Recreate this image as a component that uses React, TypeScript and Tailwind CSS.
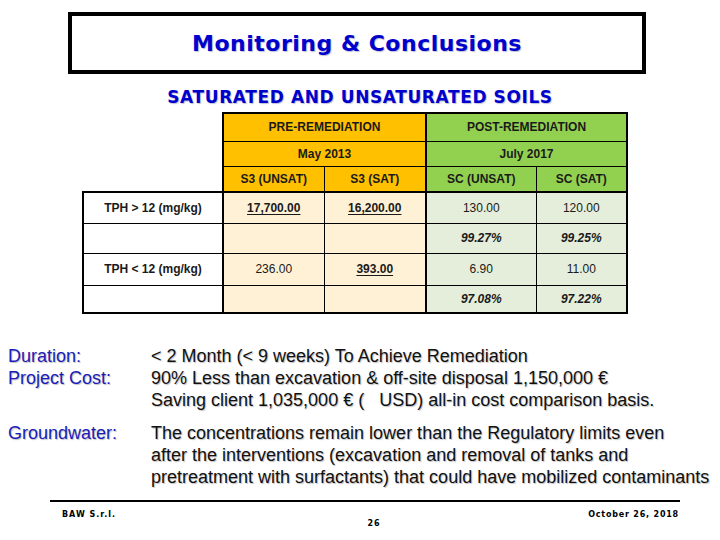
const orange = "bg-[#ffc000]"
const green = "bg-[#92d050]"
const lightOrange = "bg-[#fef1d6]"
const lightGreen = "bg-[#e4eedb]"

type Row = {
  label: string
  pre: [string, string]
  post: [string, string]
  pct?: boolean
  h: string
}

const rows: Row[] = [
  { label: "TPH > 12 (mg/kg)", pre: ["17,700.00", "16,200.00"], post: ["130.00", "120.00"], h: "h-[31px]" },
  { label: "", pre: ["", ""], post: ["99.27%", "99.25%"], pct: true, h: "h-[30px]" },
  { label: "TPH < 12 (mg/kg)", pre: ["236.00", "393.00"], post: ["6.90", "11.00"], h: "h-[32px]" },
  { label: "", pre: ["", ""], post: ["97.08%", "97.22%"], pct: true, h: "h-[28px]" },
]

const App = () => {
  return (
    <div className="w-[720px] h-[540px] bg-white overflow-hidden font-['Liberation_Sans',Arial,sans-serif] flex flex-col">

      { /* title box */ }
      <div className="mt-[12px] ml-[68px] w-[578px] h-[62px] border-[4px] border-black flex items-center justify-center">
        <h1 className="text-[22px] font-bold text-[#0000cc] font-['DejaVu_Sans',sans-serif] tracking-[0.5px] [text-shadow:1px_1px_1px_rgba(0,0,80,0.25)]">Monitoring &amp; Conclusions</h1>
      </div>

      <h2 className="mt-[13px] text-center text-[17px] font-bold text-[#0000cc] leading-[20px] font-['DejaVu_Sans',sans-serif] tracking-[0.6px] [text-shadow:1px_1px_1px_rgba(0,0,80,0.25)]">SATURATED AND UNSATURATED SOILS</h2>

      { /* table */ }
      <div className="mt-[5px] pl-[82px]">
        <table className="border-collapse text-[12px] text-center text-[#1a1a1a]">
          <colgroup>
            <col className="w-[140px]" />
            <col className="w-[101px]" />
            <col className="w-[102px]" />
            <col className="w-[110px]" />
            <col className="w-[91px]" />
          </colgroup>
          <tbody>
            <tr className="h-[28px]">
              <td rowSpan={3} className="p-0"></td>
              <th colSpan={2} className={`${orange} font-bold border-t-2 border-l-2 border-black p-0`}>PRE-REMEDIATION</th>
              <th colSpan={2} className={`${green} font-bold border-t-2 border-l-2 border-r-2 border-black p-0`}>POST-REMEDIATION</th>
            </tr>
            <tr className="h-[25px]">
              <th colSpan={2} className={`${orange} font-bold border-t border-l-2 border-black p-0`}>May 2013</th>
              <th colSpan={2} className={`${green} font-bold border-t border-l-2 border-r-2 border-black p-0`}>July 2017</th>
            </tr>
            <tr className="h-[26px]">
              <th className={`${orange} font-bold border-t border-l-2 border-black p-0`}>S3 (UNSAT)</th>
              <th className={`${orange} font-bold border-t border-l border-black p-0`}>S3 (SAT)</th>
              <th className={`${green} font-bold border-t border-l-2 border-black p-0`}>SC (UNSAT)</th>
              <th className={`${green} font-bold border-t border-l border-r-2 border-black p-0`}>SC (SAT)</th>
            </tr>
            {rows.map((r, i) => (
              <tr key={i} className={r.h}>
                <td className={`bg-white font-bold border-l-2 border-black p-0 ${i === 0 ? 'border-t-2' : 'border-t'} ${i === 3 ? 'border-b-2' : ''}`}>{r.label}</td>
                {r.pre.map((v, j) => (
                  <td key={j} className={`${lightOrange} border-black p-0 ${j === 0 ? 'border-l-2' : 'border-l'} ${i === 0 ? 'border-t-2' : 'border-t'} ${i === 3 ? 'border-b-2' : ''} ${(i === 0 || (i === 2 && j === 1)) ? 'font-bold underline underline-offset-2' : ''}`}>{v}</td>
                ))}
                {r.post.map((v, j) => (
                  <td key={j} className={`${lightGreen} border-black p-0 ${j === 0 ? 'border-l-2' : 'border-l border-r-2'} ${i === 0 ? 'border-t-2' : 'border-t'} ${i === 3 ? 'border-b-2' : ''} ${r.pct ? 'font-bold italic' : ''}`}>{v}</td>
                ))}
              </tr>
            ))}
          </tbody>
        </table>
      </div>

      { /* conclusions */ }
      <div className="mt-[31px] text-[18px] leading-[22px] text-[#111] [text-shadow:1px_1px_1px_rgba(0,0,0,0.25)]">
        <div className="flex">
          <div className="w-[151px] pl-[8px] shrink-0 text-[#1c1cb8]">
            <p>Duration:</p>
            <p>Project Cost:</p>
          </div>
          <div className="whitespace-nowrap">
            <p>&lt; 2 Month (&lt; 9 weeks) To Achieve Remediation</p>
            <p>90% Less than excavation &amp; off-site disposal 1,150,000 €</p>
            <p>Saving client 1,035,000 € (&nbsp;&nbsp;&nbsp;USD) all-in cost comparison basis.</p>
          </div>
        </div>
        <div className="flex mt-[11px]">
          <div className="w-[151px] pl-[8px] shrink-0 text-[#1c1cb8]">
            <p>Groundwater:</p>
          </div>
          <div className="whitespace-nowrap">
            <p>The concentrations remain lower than the Regulatory limits even</p>
            <p>after the interventions (excavation and removal of tanks and</p>
            <p>pretreatment with surfactants) that could have mobilized contaminants</p>
          </div>
        </div>
      </div>

      { /* footer */ }
      <div className="mt-[12px] ml-[50px] w-[630px] border-t-[2px] border-black text-[8px] font-bold text-black font-['DejaVu_Sans',sans-serif]">
        <div className="flex justify-between items-start pl-[12px] pr-[1px] pt-[7px]">
          <span className="tracking-[1px]">BAW S.r.l.</span>
          <span className="tracking-[0.8px]">October 26, 2018</span>
        </div>
        <div className="pl-[18px] -mt-[3px] text-center tracking-[1px]">26</div>
      </div>
    </div>
  )
}

export default App
